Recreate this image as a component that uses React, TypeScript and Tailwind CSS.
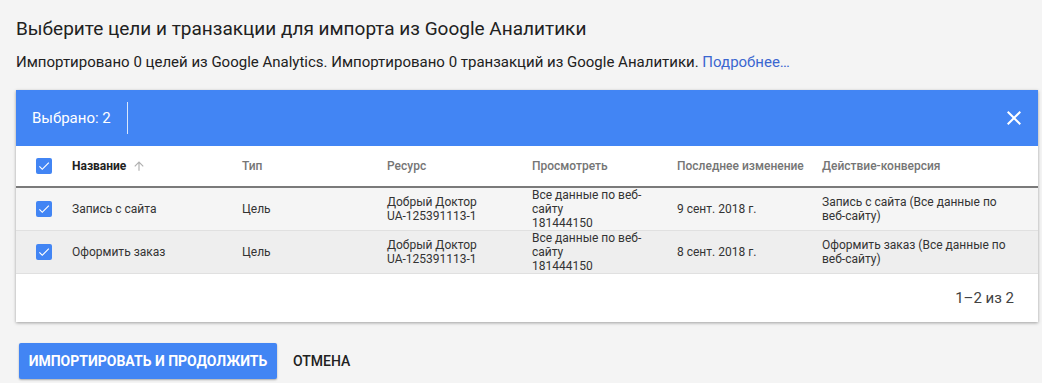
import React from "react";

const ROWS = [
  {
    name: "Запись с сайта",
    type: "Цель",
    resource: ["Добрый Доктор", "UA-125391113-1"],
    view: "Все данные по веб-сайту",
    viewId: "181444150",
    date: "9 сент. 2018 г.",
    action: "Запись с сайта (Все данные по веб-сайту)",
    bg: "bg-[#f5f5f5]",
  },
  {
    name: "Оформить заказ",
    type: "Цель",
    resource: ["Добрый Доктор", "UA-125391113-1"],
    view: "Все данные по веб-сайту",
    viewId: "181444150",
    date: "8 сент. 2018 г.",
    action: "Оформить заказ (Все данные по веб-сайту)",
    bg: "bg-[#eeeeee]",
  },
];

const GRID = "grid grid-cols-[56px_170px_145px_145px_145px_145px_1fr] items-center";

function Checkbox() {
  return (
    <div className="w-4 h-4 rounded-[2px] bg-[#4285f4] flex items-center justify-center">
      <svg viewBox="0 0 24 24" className="w-[14px] h-[14px]" fill="#fff">
        <path d="M9 16.17L4.83 12l-1.42 1.41L9 19 21 7l-1.41-1.41z" />
      </svg>
    </div>
  );
}

export default function App() {
  return (
    <div className="w-[1042px] h-[383px] overflow-hidden bg-[#f4f4f4] text-[#212121] font-['Roboto',sans-serif]">
      {/* Heading */}
      <div className="px-4 pt-[15px]">
        <h1 className="text-[19px] leading-7 font-normal text-[#212121]">
          Выберите цели и транзакции для импорта из Google Аналитики
        </h1>
        <p className="mt-[9px] text-[15px] leading-5 text-[#212121]">
          Импортировано 0 целей из Google Analytics. Импортировано 0 транзакций из Google Аналитики.{" "}
          <a className="text-[#3b67d0]" href="#">Подробнее…</a>
        </p>
      </div>

      {/* Card */}
      <div className="mx-4 mt-[18px] w-[1022px] bg-white shadow-[0_1px_3px_rgba(0,0,0,0.35)]">
        {/* Selection bar */}
        <div className="h-[56px] bg-[#4285f4] flex items-center pl-4 pr-3 text-white">
          <span className="text-[15px]">Выбрано: 2</span>
          <div className="ml-4 w-px h-8 bg-white/80" />
          <div className="flex-1" />
          <svg viewBox="0 0 24 24" className="w-6 h-6" fill="#fff">
            <path d="M19 6.41L17.59 5 12 10.59 6.41 5 5 6.41 10.59 12 5 17.59 6.41 19 12 13.41 17.59 19 19 17.59 13.41 12z" />
          </svg>
        </div>

        {/* Column headers */}
        <div className={`${GRID} h-[42px] border-b-2 border-[#7a7a7a] text-[12px] font-medium text-[#757575]`}>
          <div className="pl-5"><Checkbox /></div>
          <div className="flex items-center gap-[6px] font-bold text-[#212121]">
            Название
            <svg viewBox="0 0 24 24" className="w-[14px] h-[14px]" fill="#b0b0b0">
              <path d="M4 12l1.41 1.41L11 7.83V20h2V7.83l5.58 5.59L20 12l-8-8-8 8z" />
            </svg>
          </div>
          <div>Тип</div>
          <div>Ресурс</div>
          <div>Просмотреть</div>
          <div>Последнее изменение</div>
          <div>Действие-конверсия</div>
        </div>

        {/* Rows */}
        {ROWS.map((r) => (
          <div key={r.name} className={`${GRID} h-[43px] border-b border-[#e0e0e0] text-[12px] leading-[14px] text-[#333] ${r.bg}`}>
            <div className="pl-5"><Checkbox /></div>
            <div>{r.name}</div>
            <div>{r.type}</div>
            <div>
              <div>{r.resource[0]}</div>
              <div>{r.resource[1]}</div>
            </div>
            <div className="w-[118px]">
              <div>{r.view}</div>
              <div>{r.viewId}</div>
            </div>
            <div>{r.date}</div>
            <div className="w-[192px]">{r.action}</div>
          </div>
        ))}

        {/* Pagination */}
        <div className="h-[48px] flex items-center justify-end pr-6 text-[15px] text-[#424242]">
          1–2 из 2
        </div>
      </div>

      {/* Actions */}
      <div className="mt-[21px] ml-[19px] flex items-center gap-4">
        <button className="h-9 w-[258px] rounded-[2px] bg-[#4285f4] text-white text-[14px] font-bold uppercase shadow-[0_1px_2px_rgba(0,0,0,0.3)]">
          Импортировать и продолжить
        </button>
        <button className="h-9 px-0 text-[14px] font-medium uppercase text-[#212121]">
          Отмена
        </button>
      </div>
    </div>
  );
}
